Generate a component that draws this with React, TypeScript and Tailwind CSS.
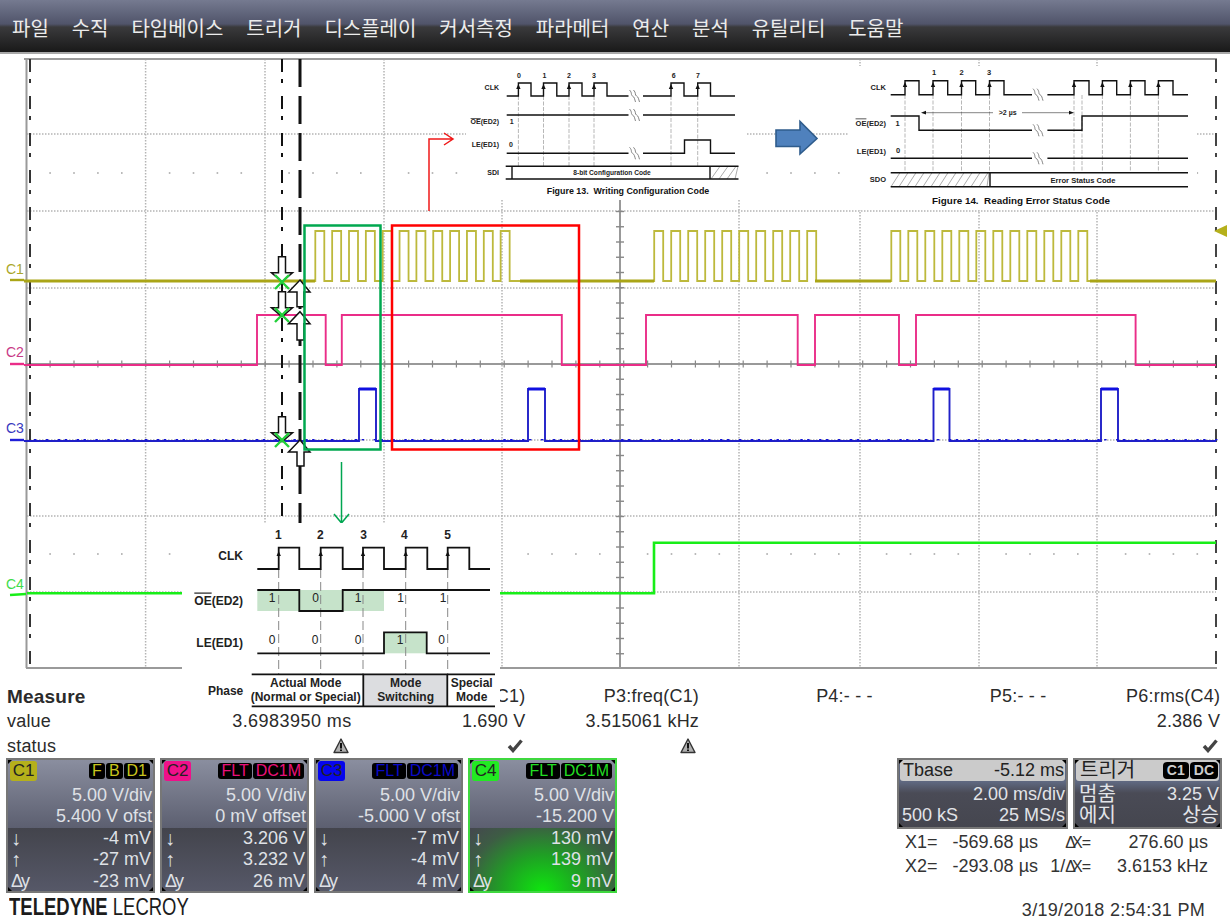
const MENU = ['파일', '수직', '타임베이스', '트리거', '디스플레이', '커서측정', '파라메터', '연산', '분석', '유틸리티', '도움말'];

const GRID_X = [145.6, 265, 384, 502, 739, 860, 979, 1097];
const GRID_Y = [134, 211, 288, 440, 516, 592];
const DOT_X = Array.from({ length: 50 }, (_, i) => 26.2 + 23.9 * i).filter((_, i) => i % 5 !== 0);

// square wave path from a list of edge positions
function wave(low: number, high: number, start: number, end: number, edges: number[]) {
  let d = `M${start} ${low}`;
  let y = low;
  for (const x of edges) {
    d += ` L${x} ${y}`;
    y = y === low ? high : low;
    d += ` L${x} ${y}`;
  }
  return `${d} L${end} ${y}`;
}

function burst(start: number, period: number, width: number, count: number) {
  const edges: number[] = [];
  for (let i = 0; i < count; i++) edges.push(start + period * i, start + period * i + width);
  return edges;
}

const C1_EDGES = [...burst(315.3, 16.85, 9, 12), ...burst(654.2, 17, 9, 10), ...burst(891.3, 17, 9, 12)];
const C2_EDGES = [257, 325.7, 341.8, 561.8, 646, 797.7, 815, 899, 916, 1135.6];
const C3_EDGES = [359, 376, 528, 545, 933.5, 949.5, 1101, 1118];
const NOISE = Array.from({ length: 120 }, (_, i) => 34 + i * 9.9 + ((i * 7) % 5));

function Markers() {
  const down = (top: number) => {
    const tip = top + 25;
    const neck = top + 16;
    return `M278.5 ${top} H285.5 V${neck} H292.5 L282 ${tip} L271.5 ${neck} H278.5 Z`;
  };
  const up = (tip: number, end: number) => {
    const neck = tip + 12;
    return `M300 ${tip} L310 ${neck} H304 V${end} H297 V${neck} H288.5 Z`;
  };
  return (
    <g>
      {[256.7, 291.7, 416.7].map((t) => (
        <path key={t} d={down(t)} fill="#fff" stroke="#111" strokeWidth="1.5" />
      ))}
      {[[280, 306.7], [311.7, 340], [440, 466]].map(([t, e]) => (
        <path key={t} d={up(t, e)} fill="#fff" stroke="#111" strokeWidth="1.5" />
      ))}
      {[282, 315, 440].map((y) => (
        <path key={y} d={`M275 ${y - 7} L289 ${y + 7} M289 ${y - 7} L275 ${y + 7}`} stroke="#22d03a" strokeWidth="2.4" />
      ))}
    </g>
  );
}

function ScopeDisplay() {
  return (
    <svg viewBox="0 54 1230 630" className="block w-[1230px] h-[630px]">
      {GRID_Y.map((y) => (
        <line key={y} x1="27" x2="1216" y1={y} y2={y} stroke="#b4b4b4" strokeWidth="1.5" strokeDasharray="1.5 1.5" />
      ))}
      {GRID_X.map((x) => (
        <line key={x} x1={x} x2={x} y1="59" y2="668" stroke="#b4b4b4" strokeWidth="1.5" strokeDasharray="1.5 1.5" />
      ))}
      {[173, 554].map((y) =>
        DOT_X.map((x) => <rect key={`${x}-${y}`} x={x - 0.8} y={y - 0.8} width="1.6" height="1.6" fill="#a8a8a8" />)
      )}
      {/* centre axes */}
      <line x1="27" x2="1216" y1="364" y2="364" stroke="#999" strokeWidth="2" />
      <line x1="620" x2="620" y1="59" y2="668" stroke="#999" strokeWidth="2" />
      {Array.from({ length: 50 }, (_, i) => 26.2 + 23.9 * i).map((x) => (
        <line key={x} x1={x} x2={x} y1="360.5" y2="367.5" stroke="#888" strokeWidth="1.2" />
      ))}
      {Array.from({ length: 40 }, (_, i) => 59 + 15.25 * i).map((y) => (
        <line key={y} x1="616" x2="624" y1={y} y2={y} stroke="#888" strokeWidth="1.4" />
      ))}
      {/* frame */}
      <line x1="24" x2="1217" y1="59" y2="59" stroke="#9a9a9a" strokeWidth="2" />
      <line x1="26" x2="1217" y1="668" y2="668" stroke="#9a9a9a" strokeWidth="2" />
      <line x1="26.5" x2="26.5" y1="59" y2="668" stroke="#9a9a9a" strokeWidth="2" />
      <line x1="1216" x2="1216" y1="59" y2="668" stroke="#444" strokeWidth="2" strokeDasharray="13 7 4 13" />
      <line x1="30" x2="30" y1="59" y2="668" stroke="#333" strokeWidth="2" strokeDasharray="13 7 4 13" />

      {/* traces */}
      <path d={wave(281, 231, 24, 1216, C1_EDGES)} fill="none" stroke="#bdb93c" strokeWidth="1.8" />
      <line x1="24" x2="315" y1="281" y2="281" stroke="#aaa517" strokeWidth="3" />
      <line x1="520" x2="654" y1="281" y2="281" stroke="#aaa517" strokeWidth="3" />
      <line x1="815" x2="891" y1="281" y2="281" stroke="#aaa517" strokeWidth="3" />
      <line x1="1090" x2="1216" y1="281" y2="281" stroke="#aaa517" strokeWidth="3" />
      <path d={wave(365, 315, 24, 1216, C2_EDGES)} fill="none" stroke="#ea2d88" strokeWidth="1.9" />
      <path d={wave(441, 389, 24, 1216, C3_EDGES)} fill="none" stroke="#2020c8" strokeWidth="1.9" />
      {[[359, 376], [528, 545], [933.5, 949.5], [1101, 1118]].map(([a, b]) => (
        <line key={a} x1={a} x2={b} y1="389" y2="389" stroke="#1010e0" strokeWidth="3" />
      ))}
      {NOISE.map((x) => (
        <rect key={x} x={x} y="439" width="2.4" height="1.4" fill="#1414d8" />
      ))}
      <path d={wave(593.3, 542.7, 27, 1216, [654])} fill="none" stroke="#18ee18" strokeWidth="2.6" />

      {/* channel stubs and labels */}
      <line x1="10" x2="24" y1="280" y2="280" stroke="#aaa517" strokeWidth="2.4" />
      <line x1="10" x2="24" y1="364" y2="364" stroke="#ea2d88" strokeWidth="2.4" />
      <line x1="10" x2="24" y1="440" y2="440" stroke="#2020d8" strokeWidth="2.4" />
      <line x1="10" x2="26" y1="595" y2="594" stroke="#18ee18" strokeWidth="2.4" />
      <text x="6" y="274" fontSize="14" fill="#aba72a">C1</text>
      <text x="6" y="357" fontSize="14" fill="#c83a86">C2</text>
      <text x="6" y="433" fontSize="14" fill="#3a3ac0">C3</text>
      <text x="6" y="589" fontSize="14" fill="#3fdc4a">C4</text>
      <polygon points="1214,231 1227,225 1227,237" fill="#b5b01b" />

      {/* cursors */}
      <line x1="282" x2="282" y1="59" y2="668" stroke="#111" strokeWidth="2" strokeDasharray="13 7 4 13" />
      <line x1="300" x2="300" y1="59" y2="668" stroke="#111" strokeWidth="3" strokeDasharray="28 9" />
      <Markers />

      {/* annotation boxes */}
      <rect x="304.5" y="225.5" width="76" height="224" fill="none" stroke="#00a84f" strokeWidth="2.5" />
      <rect x="392" y="225.5" width="187" height="224" fill="none" stroke="#ff0000" strokeWidth="2.5" />
      <path d="M429 211 V139 H452 M444 133 L453 139 L444 145" fill="none" stroke="#f01818" strokeWidth="1.5" />
      <path d="M341.5 462 V523 M334 514 L341.5 523 L349 514" fill="none" stroke="#00a651" strokeWidth="1.5" />
      <path d="M776 130 H800 V121.5 L817 138.5 L800 154 V146.5 H776 Z" fill="#4f81bd" stroke="#2f5c8c" strokeWidth="1.6" />
    </svg>
  );
}

function Break({ x, y }: { x: number; y: number }) {
  return (
    <path
      d={`M${x} ${y - 6} c3 3 1 5 3 6 s2 3 3 6 M${x + 4} ${y - 6} c3 3 1 5 3 6 s2 3 3 6`}
      fill="none"
      stroke="#777"
      strokeWidth="0.9"
    />
  );
}

function Rises({ xs, y }: { xs: number[]; y: number }) {
  return (
    <>
      {xs.map((x) => (
        <polygon key={x} points={`${x - 2.2},${y + 5} ${x + 2.2},${y + 5} ${x},${y}`} fill="#111" />
      ))}
    </>
  );
}

function Hatch({ from, to, top, bottom }: { from: number; to: number; top: number; bottom: number }) {
  const lines = [];
  for (let x = from; x < to; x += 8) {
    lines.push(<line key={x} x1={x} x2={Math.min(x + 9, to)} y1={bottom} y2={top} stroke="#888" strokeWidth="0.7" />);
  }
  return <>{lines}</>;
}

function Figure13() {
  const rises = [518.4, 543.5, 569, 594, 671, 697.7];
  const black = { fill: 'none', stroke: '#111', strokeWidth: 1.4 };
  return (
    <svg viewBox="466 60 280 140" className="absolute left-[466px] top-[60px] w-[280px] h-[140px] bg-white">
      {rises.map((x) => (
        <line key={x} x1={x} x2={x} y1="96" y2="166" stroke="#999" strokeWidth="0.7" strokeDasharray="4 1.5" />
      ))}
      {[['0', 519], ['1', 544.5], ['2', 569], ['3', 594], ['6', 673.6], ['7', 698]].map(([t, x]) => (
        <text key={t} x={x} y="77.5" fontSize="7" fontWeight="700" textAnchor="middle" fill="#222">{t}</text>
      ))}
      <text x="499" y="90" fontSize="7" fontWeight="700" textAnchor="end" fill="#222">CLK</text>
      <path d={wave(96, 83, 506.7, 628.5, [518.4, 531, 543.5, 556.8, 569, 582, 594, 607])} {...black} />
      <path d={wave(96, 83, 643, 735, [671, 684, 697.7, 710.5])} {...black} />
      <Rises xs={rises} y={84} />
      <Break x={629.5} y={96} />
      <text x="499" y="124" fontSize="7" fontWeight="700" textAnchor="end" fill="#222"><tspan textDecoration="overline">OE</tspan>(ED2)</text>
      <text x="511.6" y="124" fontSize="7" fontWeight="700" textAnchor="middle" fill="#222">1</text>
      <path d="M506.7 115 H628.5 M643 115 H735" {...black} />
      <Break x={629.5} y={115} />
      <text x="499" y="147" fontSize="7" fontWeight="700" textAnchor="end" fill="#222">LE(ED1)</text>
      <text x="511" y="147" fontSize="7" fontWeight="700" textAnchor="middle" fill="#222">0</text>
      <path d="M506.7 153.3 H628.5 M643 153.3 H684.5 V140 H710.5 V153.3 H735" {...black} />
      <Break x={629.5} y={153.3} />
      <text x="499" y="174.5" fontSize="7" fontWeight="700" textAnchor="end" fill="#222">SDI</text>
      <Hatch from={711} to={738} top={166.3} bottom={179} />
      <path d="M505.7 166.3 H738.5 M505.7 179 H738.5 M512 166.3 V179 M710 166.3 V179" {...black} />
      <text x="612" y="174.5" fontSize="6.6" fontWeight="700" textAnchor="middle" fill="#222">8-bit Configuration Code</text>
      <text x="628" y="194" fontSize="8.9" fontWeight="700" textAnchor="middle" fill="#111" className="whitespace-pre">Figure 13.  Writing Configuration Code</text>
    </svg>
  );
}

function Figure14() {
  const rises = [905, 933, 961.5, 989.5, 1074, 1102.4, 1130.4, 1158.4];
  const black = { fill: 'none', stroke: '#111', strokeWidth: 1.4 };
  return (
    <svg viewBox="848 66 349 144" className="absolute left-[848px] top-[66px] w-[349px] h-[144px] bg-white">
      {[...rises, 1082].map((x) => (
        <line key={x} x1={x} x2={x} y1="95" y2="172" stroke="#999" strokeWidth="0.7" strokeDasharray="4 1.5" />
      ))}
      {[['1', 934], ['2', 961.5], ['3', 989]].map(([t, x]) => (
        <text key={t} x={x} y="74.5" fontSize="7.5" fontWeight="700" textAnchor="middle" fill="#222">{t}</text>
      ))}
      <text x="886" y="89.5" fontSize="7.5" fontWeight="700" textAnchor="end" fill="#222">CLK</text>
      <path d={wave(94.7, 80.7, 890.7, 1032, [905, 919, 933, 947.7, 961.5, 975.7, 989.5, 1004])} {...black} />
      <path d={wave(94.7, 80.7, 1047.4, 1188, [1074, 1089, 1102.4, 1116.7, 1130.4, 1145, 1158.4, 1173])} {...black} />
      <Rises xs={rises} y={82} />
      <Break x={1033} y={94.7} />
      <text x="886" y="125.5" fontSize="7.5" fontWeight="700" textAnchor="end" fill="#222"><tspan textDecoration="overline">OE</tspan>(ED2)</text>
      <text x="897.6" y="125.5" fontSize="7.5" fontWeight="700" textAnchor="middle" fill="#222">1</text>
      <path d="M890.7 116 H919 V130.3 H1032 M1047.4 130.3 H1082 V116 H1188" {...black} />
      <Break x={1033} y={130.3} />
      <path d="M925 112.7 H993 M1022 112.7 H1070" stroke="#333" strokeWidth="0.6" />
      <polygon points="921,112.7 926,110.8 926,114.6" fill="#111" />
      <polygon points="1074,112.7 1069,110.8 1069,114.6" fill="#111" />
      <text x="1007.7" y="115" fontSize="7" fontWeight="700" textAnchor="middle" fill="#222">&gt;2 µs</text>
      <text x="886" y="154" fontSize="7.5" fontWeight="700" textAnchor="end" fill="#222">LE(ED1)</text>
      <text x="898" y="153" fontSize="7.5" fontWeight="700" textAnchor="middle" fill="#222">0</text>
      <path d="M890.7 158.3 H1032 M1047.4 158.3 H1188" {...black} />
      <Break x={1033} y={158.3} />
      <text x="886" y="182" fontSize="7.5" fontWeight="700" textAnchor="end" fill="#222">SDO</text>
      <Hatch from={891} to={989} top={172.7} bottom={186.7} />
      <path d="M890.7 172.7 H1188 M890.7 186.7 H1188 M990 172.7 V186.7" {...black} />
      <text x="1083" y="183" fontSize="7.6" fontWeight="700" textAnchor="middle" fill="#222">Error Status Code</text>
      <text x="1021" y="204" fontSize="9.85" fontWeight="700" textAnchor="middle" fill="#111" className="whitespace-pre">Figure 14.  Reading Error Status Code</text>
    </svg>
  );
}

function ModeFigure() {
  const rises = [278.7, 320.7, 363, 405.7, 447.7];
  const black = { fill: 'none', stroke: '#111', strokeWidth: 1.8 };
  const label = { fontSize: 12, fontWeight: 700, fill: '#222' };
  return (
    <svg viewBox="182 523 318 185" className="absolute left-[182px] top-[523px] w-[318px] h-[185px] bg-white z-10">
      <rect x="257.3" y="590" width="126.7" height="21" fill="#c6e3ca" />
      <rect x="384" y="632.3" width="42.7" height="21" fill="#c6e3ca" />
      <rect x="363.3" y="674.3" width="84" height="32" fill="#dcdde0" />
      {rises.map((x) => (
        <line key={x} x1={x} x2={x} y1="569" y2="674" stroke="#888" strokeWidth="1" strokeDasharray="9 4" />
      ))}
      {[['1', 278.3], ['2', 320.3], ['3', 363.7], ['4', 404.3], ['5', 447.7]].map(([t, x]) => (
        <text key={t} x={x} y="538.5" textAnchor="middle" {...label}>{t}</text>
      ))}
      <text x="243" y="560" textAnchor="end" {...label}>CLK</text>
      <path d={wave(569, 547.7, 257.3, 490, [278.7, 299.3, 320.7, 342.7, 363, 384, 405.7, 427.3, 447.7, 469.3])} {...black} />
      <Rises xs={rises} y={551} />
      <text x="243" y="604.5" textAnchor="end" {...label}><tspan textDecoration="overline">OE</tspan>(ED2)</text>
      <path d="M257.3 590 H299.3 V611 H342.7 V590 H490" {...black} />
      {[['1', 272], ['0', 315.7], ['1', 358], ['1', 400.7], ['1', 443]].map(([t, x], i) => (
        <text key={i} x={x} y="602" textAnchor="middle" fontSize="12" fill="#222">{t}</text>
      ))}
      <text x="243" y="646.5" textAnchor="end" {...label}>LE(ED1)</text>
      <path d="M257.3 653.3 H384 V632.3 H426.7 V653.3 H490" {...black} />
      {[['0', 272], ['0', 315], ['0', 358], ['1', 400], ['0', 441.7]].map(([t, x], i) => (
        <text key={i} x={x} y="643.5" textAnchor="middle" fontSize="12" fill="#222">{t}</text>
      ))}
      <path d="M251.7 674.3 H495 M251.7 706.3 H495 M363.3 674.3 V706.3 M447.3 674.3 V706.3" fill="none" stroke="#111" strokeWidth="1.8" />
      <text x="243.3" y="695" textAnchor="end" {...label}>Phase</text>
      <text x="305.7" y="686.5" textAnchor="middle" {...label}>Actual Mode</text>
      <text x="305.7" y="701" textAnchor="middle" {...label}>(Normal or Special)</text>
      <text x="405.7" y="686.5" textAnchor="middle" {...label}>Mode</text>
      <text x="405.7" y="701" textAnchor="middle" {...label}>Switching</text>
      <text x="471.7" y="686.5" textAnchor="middle" {...label}>Special</text>
      <text x="471.7" y="701" textAnchor="middle" {...label}>Mode</text>
    </svg>
  );
}

function Warn() {
  return (
    <svg viewBox="0 0 16 16" className="w-4 h-4">
      <path d="M8 1 L15 14.5 H1 Z" fill="#b0b0b0" stroke="#333" strokeWidth="1.4" strokeLinejoin="round" />
      <path d="M8 5 V10.5 M8 11.5 V13" stroke="#111" strokeWidth="2" />
    </svg>
  );
}

function Check() {
  return (
    <svg viewBox="0 0 16 15" className="w-4 h-[15px]">
      <path d="M2 8 L6 12.5 L14.5 2.5" fill="none" stroke="#444" strokeWidth="3.4" />
    </svg>
  );
}

function MeasureTable() {
  const cell = 'flex items-center justify-end';
  return (
    <div className="grid grid-cols-[171px_repeat(6,173.7px)] auto-rows-[24.67px] pl-[7px] text-[18px] leading-none text-[#2b2b2b] tracking-[0.2px] whitespace-nowrap">
      <div className="flex items-center font-bold text-[19px]">Measure</div>
      <div />
      <div className={cell}>C1)</div>
      <div className={cell}>P3:freq(C1)</div>
      <div className={cell}>P4:- - -</div>
      <div className={cell}>P5:- - -</div>
      <div className={cell}>P6:rms(C4)</div>

      <div className="flex items-center">value</div>
      <div className={`${cell} tracking-[0.45px]`}>3.6983950 ms</div>
      <div className={cell}>1.690 V</div>
      <div className={cell}>3.515061 kHz</div>
      <div />
      <div />
      <div className={cell}>2.386 V</div>

      <div className="flex items-center">status</div>
      <div className={`${cell} pr-[3px]`}><Warn /></div>
      <div className={`${cell} pr-[2px]`}><Check /></div>
      <div className={`${cell} pr-[3px]`}><Warn /></div>
      <div />
      <div />
      <div className={`${cell} pr-[2px]`}><Check /></div>
    </div>
  );
}

function Corners() {
  return (
    <>
      <span className="absolute left-0 top-0 w-[4px] h-[4px] bg-black [clip-path:polygon(0_0,100%_0,0_100%)]" />
      <span className="absolute right-0 top-0 w-[4px] h-[4px] bg-black [clip-path:polygon(0_0,100%_0,100%_100%)]" />
      <span className="absolute left-0 bottom-0 w-[4px] h-[4px] bg-black [clip-path:polygon(0_0,100%_100%,0_100%)]" />
      <span className="absolute right-0 bottom-0 w-[4px] h-[4px] bg-black [clip-path:polygon(100%_0,100%_100%,0_100%)]" />
    </>
  );
}

interface ChannelProps {
  name: string;
  badge: string;
  tag: string;
  tags: string[];
  div: string;
  ofs: string;
  low: string;
  high: string;
  dy: string;
  frame: string;
  lower: string;
}

function ChannelCard({ name, badge, tag, tags, div, ofs, low, high, dy, frame, lower }: ChannelProps) {
  const row = 'flex justify-between h-[21.5px] pl-[3px] pr-[2px]';
  return (
    <div className={`relative w-[149px] h-[135px] border-2 ${frame} text-[18px] leading-[21px] text-[#dfe1e6] whitespace-nowrap overflow-hidden`}>
      <Corners />
      <div className="h-[68px] bg-[linear-gradient(#8a8e9f,#5c5f70)]">
        <div className="flex justify-between h-[25px] pl-[2px] pr-[3px] pt-[1px]">
          <span className={`w-[27px] h-[20px] rounded-[3px] ${badge} text-[#222] text-[17px] leading-[20px] text-center`}>{name}</span>
          <span className="flex gap-[1px] mt-[2px]">
            {tags.map((t) => (
              <span key={t} className={`h-[16px] px-[3px] rounded-[3px] bg-black ${tag} text-[16px] leading-[16px]`}>{t}</span>
            ))}
          </span>
        </div>
        <div className="text-right pr-[1px] h-[21px]">{div}</div>
        <div className="text-right pr-[1px] h-[21px]">{ofs}</div>
      </div>
      <div className={`h-[63px] ${lower}`}>
        <div className={row}><span className="text-[20px]">↓</span><span>{low}</span></div>
        <div className={row}><span className="text-[20px]">↑</span><span>{high}</span></div>
        <div className={row}><span><span className="tracking-[-2px]">Δ</span>y</span><span>{dy}</span></div>
      </div>
    </div>
  );
}

const GREY_LOWER = 'bg-[linear-gradient(#43444c,#565868)]';

function TimebaseCard() {
  return (
    <div className="relative w-[171px] h-[71px] border-2 border-[#777] bg-[linear-gradient(#5f6880_0px,#5f6880_22px,#4a4b56_33px,#45464f_100%)] text-[18px] leading-[21px] text-[#e2e4e8] whitespace-nowrap">
      <Corners />
      <div className="flex justify-between h-[21px] mx-[1px] rounded-[3px] bg-[#cbcbcb] text-[#222] pl-[3px] pr-[1px]">
        <span>Tbase</span>
        <span>-5.12 ms</span>
      </div>
      <div className="text-right pr-[1px] mt-[3px] h-[21px]">2.00 ms/div</div>
      <div className="flex justify-between pl-[3px] pr-[1px] h-[21px]">
        <span>500 kS</span>
        <span>25 MS/s</span>
      </div>
    </div>
  );
}

function TriggerCard() {
  return (
    <div className="relative w-[149px] h-[71px] border-2 border-[#777] bg-[linear-gradient(#5f6880_0px,#5f6880_22px,#4a4b56_33px,#45464f_100%)] text-[18px] leading-[21px] text-[#e2e4e8] whitespace-nowrap">
      <Corners />
      <div className="flex justify-between h-[21px] mx-[1px] rounded-[3px] bg-[#cbcbcb] text-[#222] pl-[4px] pr-[1px]">
        <span className="text-[20px]">트리거</span>
        <span className="flex gap-[1px] mt-[2px]">
          <span className="h-[17px] px-[4px] rounded-[4px] bg-black text-[#ccc] text-[14px] leading-[17px] font-bold">C1</span>
          <span className="h-[17px] px-[4px] rounded-[4px] bg-black text-[#ccc] text-[14px] leading-[17px] font-bold">DC</span>
        </span>
      </div>
      <div className="flex justify-between pl-[4px] pr-[1px] mt-[3px] h-[21px]">
        <span className="text-[20px]">멈춤</span>
        <span>3.25 V</span>
      </div>
      <div className="flex justify-between pl-[4px] pr-[1px] h-[21px]">
        <span className="text-[20px]">에지</span>
        <span className="text-[20px]">상승</span>
      </div>
    </div>
  );
}

function DeltaX() {
  return (
    <span className="text-[16px]">
      <span className="tracking-[-4px]">Δ</span>
      <span className="tracking-[-1px]">X</span>=
    </span>
  );
}

export default function App() {
  return (
    <div className="relative w-[1230px] h-[923px] bg-white overflow-hidden font-['Liberation_Sans','Noto_Sans_CJK_KR',sans-serif]">
      <div className="h-[54px] border-b-2 border-[#a8a8a8] bg-[linear-gradient(#757a90_0px,#50546a_24px,#3a3a3c_27px,#191919_52px)]">
        <div className="flex gap-[22.9px] pl-[12px] pt-[14px] text-[20px] leading-[28px] text-[#ececec] font-['Noto_Sans_CJK_KR',sans-serif]">
          {MENU.map((m) => (
            <span key={m}>{m}</span>
          ))}
        </div>
      </div>

      <ScopeDisplay />
      <Figure13 />
      <Figure14 />
      <ModeFigure />

      <MeasureTable />

      <div className="flex">
        <div className="w-[897px] pl-[6px] shrink-0">
          <div className="flex gap-[5px]">
            <ChannelCard name="C1" badge="bg-[#b5b01b]" tag="text-[#c8c41e]" tags={['F', 'B', 'D1']} div="5.00 V/div" ofs="5.400 V ofst" low="-4 mV" high="-27 mV" dy="-23 mV" frame="border-[#777]" lower={GREY_LOWER} />
            <ChannelCard name="C2" badge="bg-[#f0108a]" tag="text-[#e8107a]" tags={['FLT', 'DC1M']} div="5.00 V/div" ofs="0 mV offset" low="3.206 V" high="3.232 V" dy="26 mV" frame="border-[#777]" lower={GREY_LOWER} />
            <ChannelCard name="C3" badge="bg-[#0505ee]" tag="text-[#0a0ac8]" tags={['FLT', 'DC1M']} div="5.00 V/div" ofs="-5.000 V ofst" low="-7 mV" high="-4 mV" dy="4 mV" frame="border-[#777]" lower={GREY_LOWER} />
            <ChannelCard name="C4" badge="bg-[#22ea22]" tag="text-[#22dd22]" tags={['FLT', 'DC1M']} div="5.00 V/div" ofs="-15.200 V" low="130 mV" high="139 mV" dy="9 mV" frame="border-[#3fd83f]" lower="bg-[radial-gradient(ellipse_at_50%_100%,#0ee60e_0%,#1fa024_40%,#3d5c44_75%,#45474f_100%)]" />
          </div>
          <div className="mt-[1px] pl-[4px] text-[24px] leading-[26px] text-[#1c1c1c] whitespace-nowrap origin-left scale-x-[0.77]">
            <span className="font-bold">TELEDYNE</span> <span>LECROY</span>
          </div>
        </div>

        <div className="w-[325px] shrink-0 text-[18px] text-[#333] whitespace-nowrap">
          <div className="flex gap-[5px]">
            <TimebaseCard />
            <TriggerCard />
          </div>
          <div className="grid grid-cols-[133px_53px_117px] auto-rows-[24px] pl-[8px] leading-[24px] mt-[1px]">
            <div className="flex justify-between"><span>X1=</span><span>-569.68 µs</span></div>
            <div className="text-right"><DeltaX /></div>
            <div className="text-right">276.60 µs</div>
            <div className="flex justify-between"><span>X2=</span><span>-293.08 µs</span></div>
            <div className="text-right">1/<DeltaX /></div>
            <div className="text-right">3.6153 kHz</div>
          </div>
          <div className="mt-[20px] pr-[17px] text-right leading-[24px] tracking-[0.3px]">3/19/2018 2:54:31 PM</div>
        </div>
      </div>
    </div>
  );
}
